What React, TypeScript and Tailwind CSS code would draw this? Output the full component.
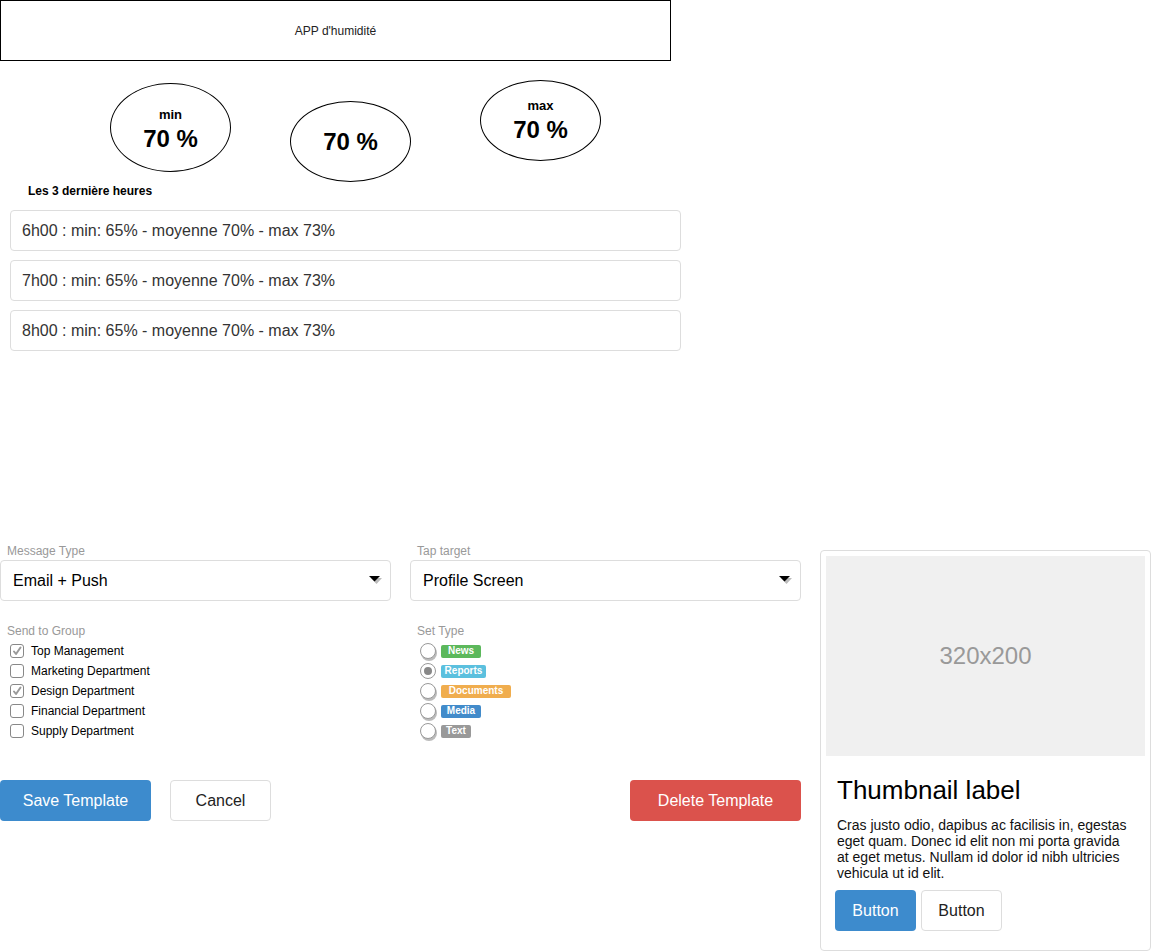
import React from "react";

const font = { fontFamily: '"Liberation Sans", Arial, sans-serif' };

function Arrow() {
  return (
    <svg width="16" height="10" viewBox="0 0 16 10" className="shrink-0">
      <polygon points="3,2 14,2 8.5,8" fill="#bbb" />
      <polygon points="1,0 12,0 6.5,5.5" fill="#000" />
    </svg>
  );
}

function Check({ checked, label }: { checked?: boolean; label: string }) {
  return (
    <div className="flex items-center h-[20px]">
      <div className="ml-[10px] w-[14px] h-[14px] rounded-[3px] border border-[#888] bg-white flex items-center justify-center">
        {checked && (
          <svg width="10" height="10" viewBox="0 0 10 10">
            <path d="M2 5.5 L4 8 L8.5 1.5" stroke="#999" strokeWidth="2" fill="none" strokeLinecap="round" strokeLinejoin="round" />
          </svg>
        )}
      </div>
      <span className="ml-[7px] text-[12px] text-black">{label}</span>
    </div>
  );
}

function Radio({ selected, label, color, w }: { selected?: boolean; label: string; color: string; w: string }) {
  return (
    <div className="flex items-center h-[20px]">
      <div className="ml-[10px] relative w-[16px] h-[16px]">
        {!selected && <div className="absolute left-[1px] top-[2px] w-[16px] h-[16px] rounded-full bg-[#bbb]" />}
        <div className="absolute inset-0 rounded-full border border-[#999] bg-white flex items-center justify-center">
          {selected && <div className="w-[8px] h-[8px] rounded-full bg-[#888]" />}
        </div>
      </div>
      <div
        className={`ml-[5px] h-[13px] rounded-[2px] text-white text-[10px] font-bold flex items-center justify-center leading-none ${w} ${color}`}
      >
        {label}
      </div>
    </div>
  );
}

export default function App() {
  const rows = ["6h00", "7h00", "8h00"];
  return (
    <div className="w-[1151px] h-[951px] bg-white relative overflow-hidden" style={font}>
      {/* Header */}
      <div className="w-[671px] h-[61px] border border-black flex items-center justify-center text-[12px] text-[#222]">
        APP d'humidité
      </div>

      {/* Ellipses */}
      <div className="flex items-start mt-[19px] h-[102px]">
        <div className="ml-[110px] mt-[3px] w-[121px] h-[89px] rounded-[50%] border border-black flex flex-col items-center justify-center font-bold text-black">
          <div className="text-[13px] leading-[20px] mt-[3px]">min</div>
          <div className="text-[24px] leading-[28px]">70 %</div>
        </div>
        <div className="ml-[59px] mt-[21px] w-[121px] h-[81px] rounded-[50%] border border-black flex flex-col items-center justify-center font-bold text-black">
          <div className="text-[24px] leading-[28px]">70 %</div>
        </div>
        <div className="ml-[69px] mt-0 w-[121px] h-[81px] rounded-[50%] border border-black flex flex-col items-center justify-center font-bold text-black">
          <div className="text-[13px] leading-[20px] -mt-[2px]">max</div>
          <div className="text-[24px] leading-[28px]">70 %</div>
        </div>
      </div>

      <div className="ml-[28px] text-[12px] font-bold leading-[18px] text-black">Les 3 dernière heures</div>

      <div className="mt-[10px] ml-[10px] flex flex-col gap-[9px] w-[671px]">
        {rows.map((r) => (
          <div key={r} className="h-[41px] rounded-[4px] border border-[#ddd] flex items-center pl-[11px] text-[16px] text-[#333]">
            {r} : min: 65% - moyenne 70% - max 73%
          </div>
        ))}
      </div>

      {/* Bottom section */}
      <div className="mt-[189px] flex items-start">
        <div className="w-[801px] flex flex-col">
          <div className="flex gap-[19px]">
            <div className="w-[391px]">
              <div className="text-[12px] leading-[20px] text-[#999] pl-[7px] pt-[1px] h-[20px]">Message Type</div>
              <div className="h-[41px] rounded-[4px] border border-[#ddd] flex items-center justify-between pl-[12px] pr-[6px] text-[16px] text-black">
                <span>Email + Push</span>
                <Arrow />
              </div>
            </div>
            <div className="w-[391px]">
              <div className="text-[12px] leading-[20px] text-[#999] pl-[7px] pt-[1px] h-[20px]">Tap target</div>
              <div className="h-[41px] rounded-[4px] border border-[#ddd] flex items-center justify-between pl-[12px] pr-[6px] text-[16px] text-black">
                <span>Profile Screen</span>
                <Arrow />
              </div>
            </div>
          </div>

          <div className="flex gap-[19px] mt-[20px]">
            <div className="w-[391px]">
              <div className="text-[12px] leading-[20px] text-[#999] pl-[7px]">Send to Group</div>
              <Check checked label="Top Management" />
              <Check label="Marketing Department" />
              <Check checked label="Design Department" />
              <Check label="Financial Department" />
              <Check label="Supply Department" />
            </div>
            <div className="w-[391px]">
              <div className="text-[12px] leading-[20px] text-[#999] pl-[7px]">Set Type</div>
              <Radio label="News" color="bg-[#5cb85c]" w="w-[40px]" />
              <Radio selected label="Reports" color="bg-[#5bc0de]" w="w-[45px]" />
              <Radio label="Documents" color="bg-[#f0ad4e]" w="w-[70px]" />
              <Radio label="Media" color="bg-[#428bca]" w="w-[40px]" />
              <Radio label="Text" color="bg-[#999]" w="w-[30px]" />
            </div>
          </div>

          <div className="flex mt-[39px] items-center">
            <div className="w-[151px] h-[41px] rounded-[4px] bg-[#3d8bcd] text-white text-[16px] flex items-center justify-center">
              Save Template
            </div>
            <div className="ml-[19px] w-[101px] h-[41px] rounded-[4px] border border-[#ddd] bg-white text-[#222] text-[16px] flex items-center justify-center">
              Cancel
            </div>
            <div className="ml-auto w-[171px] h-[41px] rounded-[4px] bg-[#db524c] text-white text-[16px] flex items-center justify-center">
              Delete Template
            </div>
          </div>
        </div>

        {/* Thumbnail card */}
        <div className="ml-[19px] mt-[10px] w-[331px] h-[401px] rounded-[4px] border border-[#ddd] p-[5px] flex flex-col">
          <div className="w-[319px] h-[200px] bg-[#f0f0f0] flex items-center justify-center text-[24px] text-[#999]">
            320x200
          </div>
          <div className="px-[11px] pt-[19px]">
            <div className="text-[26px] leading-[30px] text-black">Thumbnail label</div>
            <div className="mt-[12px] text-[14px] leading-[16px] text-[#111] w-[292px]">
              Cras justo odio, dapibus ac facilisis in, egestas eget quam. Donec id elit non mi porta gravida at eget metus. Nullam id dolor id nibh ultricies vehicula ut id elit.
            </div>
            <div className="flex gap-[5px] mt-[9px] -ml-[2px]">
              <div className="w-[81px] h-[41px] rounded-[4px] bg-[#3d8bcd] text-white text-[16px] flex items-center justify-center">
                Button
              </div>
              <div className="w-[81px] h-[41px] rounded-[4px] border border-[#ddd] bg-white text-[#222] text-[16px] flex items-center justify-center">
                Button
              </div>
            </div>
          </div>
        </div>
      </div>
    </div>
  );
}
